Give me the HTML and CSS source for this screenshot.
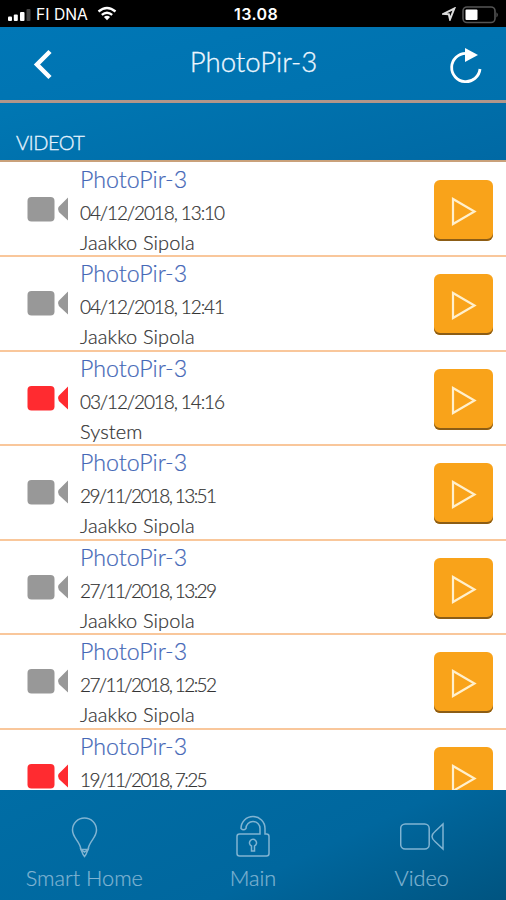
FILE: index.html
```
<!DOCTYPE html>
<html lang="fi">
<head>
<meta charset="utf-8">
<title>PhotoPir-3</title>
<link rel="stylesheet" href="styles.css">
</head>
<body>
<svg class="defs" aria-hidden="true">
  <symbol id="camera" viewBox="0 0 42 26"><rect x="0.5" y="0" width="27" height="24.5" rx="4"/><path d="M41 0.500V23.500L34 17Q28 12 34 7.500Z"/></symbol>
  <symbol id="play" viewBox="0 0 26 30"><path d="M2 2V27L23.500 14.500Z"/></symbol>
</svg>
<div class="status">
  <svg class="signal" viewBox="0 0 24 14"><rect x="0" y="8.500" width="4" height="4.500" rx="1"/><rect x="5.800" y="6.500" width="4" height="6.500" rx="1"/><rect x="12" y="4" width="4.500" height="9" rx="1"/><rect class="dim" x="18.500" y="1" width="4" height="12" rx="1"/></svg>
  <span class="carrier">FI DNA</span>
  <svg class="wifi" viewBox="0 0 20 15"><path d="M1.500 5.500Q10-1.500 18.500 5.500"/><path d="M4.800 8.900Q10 4.500 15.200 8.900"/><path class="dot" d="M6.900 11Q10 8.300 13.100 11L10 14.300Z"/></svg>
  <span class="clock">13.08</span>
  <svg class="locate" viewBox="0 0 14 14"><path d="M1.500 6.800L12.300 1.500L8 12.300L6.800 7.300Z"/></svg>
  <svg class="battery" viewBox="0 0 37 18"><rect class="shell" x="1" y="1" width="32" height="15.500" rx="4"/><rect class="charge" x="3.500" y="3.500" width="12" height="10.500" rx="1"/><path class="cap" d="M34.500 6.200Q37 8.800 34.500 11.400Z"/></svg>
</div>
<header class="bar">
  <svg class="back" viewBox="0 0 20 32"><path d="M17 2.500L4 15.500L17 28.500"/></svg>
  <h1>PhotoPir-3</h1>
  <svg class="reload" viewBox="0 0 34 38"><path class="arc" d="M18 5.300A14.200 14.200 0 1 0 32 21"/><path class="head" d="M17 0L30 7L17 14Z"/></svg>
</header>
<h2 class="section">VIDEOT</h2>
<main class="list">
  <article class="row"><svg class="cam"><use href="#camera"/></svg><div class="info"><h3>PhotoPir-3</h3><p class="date">04/12/2018, 13:10</p><p class="name">Jaakko Sipola</p></div><button class="play"><svg><use href="#play"/></svg></button></article>
  <article class="row"><svg class="cam"><use href="#camera"/></svg><div class="info"><h3>PhotoPir-3</h3><p class="date">04/12/2018, 12:41</p><p class="name">Jaakko Sipola</p></div><button class="play"><svg><use href="#play"/></svg></button></article>
  <article class="row alert"><svg class="cam"><use href="#camera"/></svg><div class="info"><h3>PhotoPir-3</h3><p class="date">03/12/2018, 14:16</p><p class="name">System</p></div><button class="play"><svg><use href="#play"/></svg></button></article>
  <article class="row"><svg class="cam"><use href="#camera"/></svg><div class="info"><h3>PhotoPir-3</h3><p class="date tight">29/11/2018, 13:51</p><p class="name">Jaakko Sipola</p></div><button class="play"><svg><use href="#play"/></svg></button></article>
  <article class="row"><svg class="cam"><use href="#camera"/></svg><div class="info"><h3>PhotoPir-3</h3><p class="date tight">27/11/2018, 13:29</p><p class="name">Jaakko Sipola</p></div><button class="play"><svg><use href="#play"/></svg></button></article>
  <article class="row"><svg class="cam"><use href="#camera"/></svg><div class="info"><h3>PhotoPir-3</h3><p class="date tight">27/11/2018, 12:52</p><p class="name">Jaakko Sipola</p></div><button class="play"><svg><use href="#play"/></svg></button></article>
  <article class="row alert"><svg class="cam"><use href="#camera"/></svg><div class="info"><h3>PhotoPir-3</h3><p class="date tight">19/11/2018, 7:25</p></div><button class="play"><svg><use href="#play"/></svg></button></article>
</main>
<nav class="tabs">
  <a class="tab"><svg viewBox="0 0 44 44"><path d="M19 34.500C18 26 10.500 23 10.500 15A12 12 0 0 1 34.500 15C34.500 23 27 26 26 34.500Z"/><path d="M19 34.500L21 39.500L22.500 41.500L24 39.500L26 34.500L22.500 37Z"/></svg><span>Smart Home</span></a>
  <a class="tab"><svg viewBox="0 0 44 44"><path d="M10 13.500A12 12 0 0 1 34 13.500V19H35.500A2.500 2.500 0 0 1 38 21.500V38.500A2.500 2.500 0 0 1 35.500 41H8.500A2.500 2.500 0 0 1 6 38.500V21.500A2.500 2.500 0 0 1 8.500 19H29V13.500A7 7 0 0 0 15 13.500Q12.500 16 10 13.500Z"/><path d="M20.500 36V31A3.500 3.500 0 1 1 23.500 31V36Z"/></svg><span>Main</span></a>
  <a class="tab"><svg viewBox="0 0 44 44"><rect x="0.700" y="9" width="28.500" height="25" rx="4.500"/><path d="M43 9V34L35 26.500Q29 21.500 35 16.500Z"/></svg><span>Video</span></a>
</nav>
</body>
</html>
```
FILE: styles.css
```
* { box-sizing: border-box; margin: 0; padding: 0; }
body {
  width: 506px; height: 900px; overflow: hidden;
  display: flex; flex-direction: column;
  font-family: Lato, "Open Sans", sans-serif; background: #fff;
}
.defs { display: none; }
svg { display: block; flex: none; }
.status {
  height: 27px; flex: none; display: flex; align-items: center;
  background: #000; color: #fff; padding-left: 8px;
  font-family: Inter, sans-serif;
}
.signal { width: 24px; height: 14px; fill: #fff; margin-top: 3px; }
.dim { fill: #444; }
.carrier { width: 53px; margin: 2px 0 0 4px; font-size: 15.700px; white-space: nowrap; }
.wifi { width: 20px; height: 15px; margin-left: 8px; fill: none; stroke: #fff; stroke-width: 2.300; }
.wifi .dot { fill: #fff; stroke: none; }
.clock { width: 46px; margin: 1px 0 0 117px; font-size: 16px; font-weight: 600; letter-spacing: 0.400px; }
.locate { width: 14px; height: 14px; margin-left: 162px; fill: none; stroke: #ddd; stroke-width: 2; }
.battery { width: 37px; height: 18px; margin-left: 6px; margin-top: 2px; }
.shell { fill: none; stroke: #555; stroke-width: 1.600; }
.charge { fill: #fff; }
.cap { fill: #666; }
.bar {
  height: 76px; flex: none; display: flex; align-items: flex-start;
  background: linear-gradient(165deg, #0077b6, #0071ad);
  border-bottom: 3px solid #b1968a; padding: 21px 24px 0 33px;
}
.back { width: 20px; height: 32px; margin-top: 1px; fill: none; stroke: #fff; stroke-width: 4.500; }
.bar h1 { flex: 1; margin-top: -3px; padding-left: 6px; text-align: center; color: #eef7ff; font-size: 27.600px; line-height: 34px; font-weight: 300; -webkit-text-stroke: 0.300px; }
.reload { width: 34px; height: 38px; }
.arc { fill: none; stroke: #fff; stroke-width: 2.800; }
.head { fill: #fff; }
.section {
  height: 59px; flex: none; padding: 27px 0 0 16px;
  background: linear-gradient(165deg, #0077b3, #0069a4);
  border-bottom: 2px solid #c9a17b;
  color: #e7f4ff; font-size: 20px; line-height: 25px; font-weight: 300; letter-spacing: -0.500px; -webkit-text-stroke: 0.300px;
}
.list { height: 628px; flex: none; overflow: hidden; padding-top: 1px; }
.row { height: 94.450px; display: flex; border-bottom: 2px solid #f9c79b; padding: 0 13px 0 27px; }
.cam { width: 42px; height: 26px; margin-top: 34px; fill: #989898; }
.alert .cam { fill: #ff2b30; }
.info { flex: 1; padding-left: 11px; color: #333; -webkit-text-stroke: 0.200px; }
.info h3 { height: 32px; line-height: 32px; color: #4568b7; font-size: 23.200px; font-weight: 300; }
.info p { height: 29px; line-height: 36px; font-size: 20px; font-weight: 300; white-space: nowrap; }
.info .name { letter-spacing: 0.100px; }
.info .date { font-size: 19px; letter-spacing: -1.100px; }
.info .tight { letter-spacing: -1.600px; }
.play {
  width: 59px; height: 61px; margin-top: 17px; border: 0; border-radius: 6px;
  background: #f9a31a; box-shadow: inset 0 -2px 0 #8c5d16;
  display: flex; align-items: center; justify-content: center;
}
.play svg { width: 26px; height: 30px; margin: 3px 0 0 0; fill: none; stroke: #fff0cd; stroke-width: 2.200; }
.tabs {
  height: 110px; flex: none; display: grid; grid-template-columns: repeat(3, 1fr);
  background: linear-gradient(155deg, #006da5 0%, #00679e 60%, #005480 100%);
}
.tab { display: flex; flex-direction: column; align-items: center; padding-top: 25px; color: #80b4d2; }
.tab svg { width: 44px; height: 44px; fill: none; stroke: #80b4d2; stroke-width: 1.500; }
.tab span { margin-top: 5px; font-size: 21.700px; line-height: 28px; font-weight: 300; white-space: nowrap; -webkit-text-stroke: 0.200px; }
```
